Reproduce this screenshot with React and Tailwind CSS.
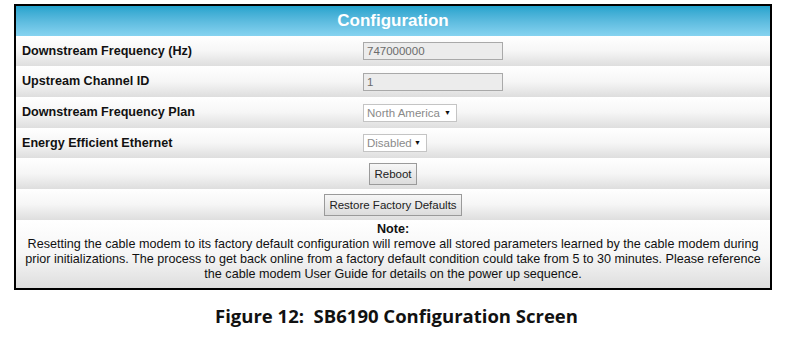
import React from 'react';

const rowBg = 'bg-gradient-to-b from-white via-[#f6f6f6] to-[#dedede]';

const Field = ({ label, h, children }) => (
  <div className={`flex items-center ${h} ${rowBg}`}>
    <div className="w-[347px] pl-[6px] font-bold text-[12.6px] text-[#111]">{label}</div>
    <div className="flex-1">{children}</div>
  </div>
);

const TextBox = ({ value }) => (
  <div className="w-[140px] h-[18px] border border-[#a9a9a9] bg-[#ececec] text-[11.5px] leading-[16px] text-[#6b6b6b] pl-[3px]">
    {value}
  </div>
);

const Select = ({ value, width }) => (
  <div className={`${width} h-[18px] border border-[#c4c4c4] bg-white text-[11.5px] leading-[16px] text-[#8a8a8a] pl-[3px] flex items-center justify-between pr-[5px]`}>
    <span>{value}</span>
    <span className="text-[#111] text-[7px]">▼</span>
  </div>
);

const Button = ({ children }) => (
  <div className="border border-[#9a9a9a] bg-gradient-to-b from-[#f7f7f7] to-[#dcdcdc] text-[11.5px] text-[#222] px-[4px] h-[22px] leading-[20px]">
    {children}
  </div>
);

const App = () => {
  return (
    <div className="w-[791px] h-[342px] bg-white pt-[4px] font-['Liberation_Sans',Arial,sans-serif]">
      <div className="ml-[14px] w-[758px] border-2 border-black">
        <div className="h-[30px] bg-gradient-to-b from-[#22a3cd] to-[#86d3f0] flex items-center justify-center">
          <span className="text-white font-bold text-[17px]">Configuration</span>
        </div>
        <Field h="h-[30px]" label="Downstream Frequency (Hz)"><TextBox value="747000000" /></Field>
        <Field h="h-[31px]" label="Upstream Channel ID"><TextBox value="1" /></Field>
        <Field h="h-[31px]" label="Downstream Frequency Plan"><Select value="North America" width="w-[94px]" /></Field>
        <Field h="h-[30px]" label="Energy Efficient Ethernet"><Select value="Disabled" width="w-[64px]" /></Field>
        <div className={`flex items-center justify-center h-[31px] ${rowBg}`}>
          <Button>Reboot</Button>
        </div>
        <div className={`flex items-center justify-center h-[31px] ${rowBg}`}>
          <Button>Restore Factory Defaults</Button>
        </div>
        <div className={`text-center text-[12.6px] leading-[15px] text-[#111] pt-[2px] pb-[6px] ${rowBg}`}>
          <div className="font-bold">Note:</div>
          <p>
            Resetting the cable modem to its factory default configuration will remove all stored parameters learned by the cable modem during
            <br />
            prior initializations. The process to get back online from a factory default condition could take from 5 to 30 minutes. Please reference
            <br />
            the cable modem User Guide for details on the power up sequence.
          </p>
        </div>
      </div>
      <div className="mt-[12px] text-center font-['Open_Sans',sans-serif] font-bold text-[18.5px] text-[#111] pl-[2px]">
        Figure 12:&nbsp;&nbsp;SB6190 Configuration Screen
      </div>
    </div>
  );
};

export default App;
